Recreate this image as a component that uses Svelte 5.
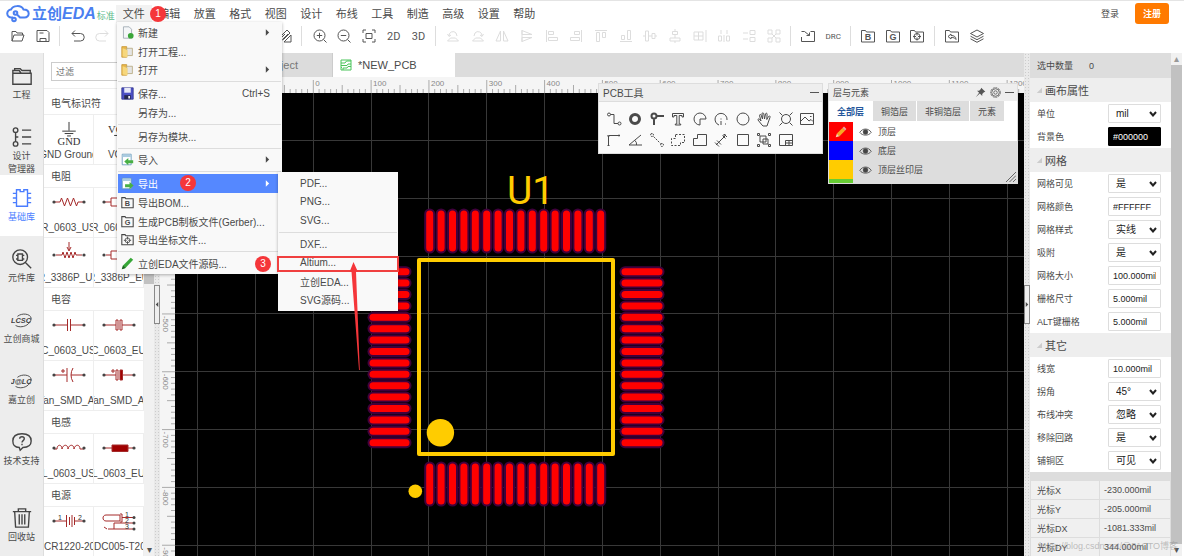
<script>
  const menus = ["文件", "编辑", "放置", "格式", "视图", "设计", "布线", "工具", "制造", "高级", "设置", "帮助"];

  const folder = "M1.5 14V2.5h4l1 1.5h8v10z";

  const toolbar = [
    { d: "M2 13V3.5h4l1 1.5h5.5v2M2 13l2-6h10l-2 6z" },
    { d: "M2 2.5h10l2 2v9H2zM5 13.5V10.5h6v3M4.5 5h4" },
    { sep: true },
    { d: "M5 2.5 2 5.5l3 3M2 5.5h8.500a3.5 3.5 0 0 1 0 7.5H4" },
    { d: "M11 2.5l3 3-3 3M14 5.5H5.500a3.5 3.5 0 0 0 0 7.5H12", off: true },
    { d: "M5 5h9v9H5zM2 11V2h9" },
    { d: "M3 3h10v11H3zM6 2h4v2H6z" },
    { d: "M3 3l10 10M13 3 3 13" },
    { d: "M3 4h10M5 4v10h6V4" },
    { sep: true },
    { d: "M7 3a4 4 0 1 0 0 8 4 4 0 0 0 0-8M10 10l4 4" },
    { d: "M2 8h12M8 2v12" },
    { d: "M3 13l1-5 6-6 3 3-6 6zM7 14l7-7v7zM5 9l3-3M6 11l5-5" },
    { sep: true },
    { d: "M7.5 2a5.5 5.5 0 1 0 0 11 5.5 5.5 0 0 0 0-11M4.8 7.5h5.4M7.5 4.8v5.4M11.5 11.5l3 3" },
    { d: "M7.5 2a5.5 5.5 0 1 0 0 11 5.5 5.5 0 0 0 0-11M4.8 7.5h5.4M11.5 11.5l3 3" },
    { d: "M2 5V2h3M11 2h3v3M14 11v3h-3M5 14H2v-3M5 5.5h6v5H5z" },
    { t: "2D" },
    { t: "3D" },
    { sep: true },
    { d: "M2.5 13h11l-3-3h-5zM4 8a4 4 0 0 1 7-3l1 3M2.5 6l1.5 2.5L6 7", off: true },
    { d: "M2.5 13h11l-3-3h-5zM12 8a4 4 0 0 0-7-3L4 8M13.5 6 12 8.5 10 7", off: true },
    { d: "M6.5 3v10H2zM9.5 3v10H14z", off: true },
    { d: "M3 2v12M3 2.5 13 6.5H3zM3 9.5h10L3 13.5z", off: true },
    { d: "M2.5 2v12M4.5 3.5h5v3h-5zM4.5 9.5h9v3h-9z", off: true },
    { d: "M13.5 2v12M6.5 3.5h5v3h-5zM2.5 9.5h9v3h-9z", off: true },
    { d: "M2 2.5h12M3.5 4.5h3v9h-3zM9.5 4.5h3v5h-3z", off: true },
    { d: "M2 13.5h12M3.5 7.5h3v4h-3zM9.5 2.5h3v9h-3z", off: true },
    { d: "M1 8h2M3.5 3h3v10h-3zM7 8h3M10 5.5h3v5h-3zM13 8h2", off: true },
    { d: "M8 1v2M5.5 3.5h5v3h-5zM8 7v3M3 10h10v3H3zM8 13v2", off: true },
    { d: "M14 2v12M2 4h9v8H2zM6.5 4v8M2 8h9", off: true },
    { d: "M5 2v4M11 2v4M2.5 8h3v5h-3zM10.5 8h3v5h-3zM8 7v7", off: true },
    { d: "M2 5h5M2 11h5M9 2.5h5v4H9zM9 9.5h5v4H9z", off: true },
    { d: "M2 2h4v4H2zM10 2h4v4h-4zM2 10h4v4H2zM10 10h4v4h-4zM6 6l4 4M10 6l-4 4", off: true },
    { sep: true },
    { d: "M1.5 9v4.5h13V3.5h-4M1.5 3.5h3l5 4M9.5 4.5v3h-3" },
    { t: "DRC", small: true },
    { sep: true },
    { d: folder, letter: "B" },
    { d: folder, letter: "G" },
    { d: folder + "M8 5.5a3 3 0 1 0 0 6 3 3 0 0 0 0-6M8 4.5v3M8 9.5v3M4 8.5h3M9 8.5h3" },
    { sep: true },
    { d: folder + "M7 6 4 8.5 7 11V9.5c3 0 4 .5 5 2 0-3-2-4-5-4z" },
    { d: "M8 2 1.5 5.5 8 9l6.5-3.5zM1.5 8.2 8 11.7l6.5-3.5M1.5 10.8 8 14.3l6.5-3.5" },
  ];

  const sideItems = [
    { label: "工程", d: "M2 21V6h7l2 3h11v12zM2 9h20M4 6V4h6l2 2h9v3" },
    { label: "设计\n管理器", d: "M5 2a2 2 0 1 0 0 5 2 2 0 0 0 0-5M5 7v10M5 17a2 2 0 1 0 0 5 2 2 0 0 0 0-5M5 12h3M12 4.5h10M12 12h10M12 19.5h10" },
    { label: "基础库", d: "M6 3h4v2h4V3h4v18H6zM2 7h4M2 12h4M2 17h4M18 7h4M18 12h4M18 17h4", active: true },
    { label: "元件库", d: "M10 2a8 8 0 1 0 0 16 8 8 0 0 0 0-16M16 16l6 6M7.5 6.5h5v7h-5zM5.5 8h2M5.5 12h2M12.5 8h2M12.5 12h2" },
    { label: "立创商城", brand: "LCSC" },
    { label: "嘉立创", brand: "J@LC" },
    { label: "技术支持", d: "M12 3C5 3 2 6 2 11s3 7 7 7l1 3 3-3c6 0 9-2 9-7s-3-8-10-8M9.5 8.5c0-3 5-3 5 0 0 2-2.5 2-2.5 4M12 14v1.5" },
  ];

  const library = [
    {
      title: "电气标识符",
      parts: [
        { name: "GND Ground", kind: "gnd" },
        { name: "VCC", kind: "vcc" },
      ],
    },
    {
      title: "电阻",
      parts: [
        { name: "R_0603_US", d: "M2 8h6l1.5-4 3 8 3-8 3 8 3-8 3 8 1.5-4h6" },
        { name: "R_0603_EU", d: "M2 8h7M9 4h16v8H9zM25 8h7" },
        { name: "R_3386P_US", d: "M4 11h6l1-3 2 6 2-6 2 6 2-6 2 6 2-6 1 3h6M17-2v8M15 3l2 4 2-4", low: true },
        { name: "R_3386P_EU", d: "M4 11h5M9 7h16v8H9zM25 11h5M17-2v8", low: true },
      ],
    },
    {
      title: "电容",
      parts: [
        { name: "C_0603_US", d: "M2 8h13M15.5 2v12M18.5 2v12M19 8h13" },
        { name: "C_0603_EU", d: "M2 8h12M14 3h2v10h-2zM18 3h2v10h-2zM20 8h12" },
        { name: "C_Tan_SMD_A-US", d: "M2 8h13M15 1v14M21 1q-4 7 0 14M19 8h13M9 4h4M11 2v4" },
        { name: "C_Tan_SMD_A-EU", d: "M2 8h12M14 3h2v10h-2zM20 8h12M9 4h4M11 2v4", fill: "M18 3h2.5v10H18z" },
      ],
    },
    {
      title: "电感",
      parts: [
        { name: "L_0603_US", d: "M2 9h3c0-5 5-5 5 0 1-5 6-5 6 0 1-5 6-5 6 0 1-5 6-5 6 0h4" },
        { name: "L_0603_EU", d: "M2 8h8M26 8h6", fill: "M10 5h16v6.5H10z" },
      ],
    },
    {
      title: "电源",
      parts: [
        { name: "CR1220-2032", d: "M2 8h12M14.5 2v12M17.5 4v8M20 2v12M22.5 4v8M23 8h9", marks: true, left: true },
        { name: "DC005-T20", d: "M18 2H4C0 2 0 8 4 8h14zM18 1h2v8h-2M20 4.5h12M32 10H12v6H6M2 14l3 2M12 16h20", jack: true, left: true },
      ],
    },
  ];

  const fileMenu = [
    { icon: "new", label: "新建", sub: true },
    { icon: "folder", label: "打开工程..." },
    { icon: "folder", label: "打开", sub: true },
    null,
    { icon: "save", label: "保存...", key: "Ctrl+S" },
    { label: "另存为..." },
    null,
    { label: "另存为模块..." },
    null,
    { icon: "import", label: "导入", sub: true },
    null,
    { icon: "export", label: "导出", sub: true, active: true },
    { icon: "B", label: "导出BOM..." },
    { icon: "G", label: "生成PCB制板文件(Gerber)..." },
    { icon: "pos", label: "导出坐标文件..." },
    null,
    { icon: "pen", label: "立创EDA文件源码..." },
  ];

  const exportMenu = ["PDF...", "PNG...", "SVG...", null, "DXF...", "Altium...", "立创EDA...", "SVG源码..."];

  const pcbTools = [
    { name: "导线", d: "M3 2a1.5 1.5 0 1 0 0 3 1.5 1.5 0 0 0 0-3M4.5 3.5H8v9h4M13.5 11a1.5 1.5 0 1 0 0 3 1.5 1.5 0 0 0 0-3" },
    { name: "焊盘", d: "M8 3.5a4.5 4.5 0 1 0 0 9 4.5 4.5 0 0 0 0-9", w: 3 },
    { name: "过孔", d: "M5 2.5a2.5 2.5 0 1 0 0 5 2.5 2.5 0 0 0 0-5M7.5 5H15M5 7.5V14", w: 2 },
    { name: "文本", d: "M2.5 2.5h11v3.5h-1.5V4.5H9.2v8.5h1.5v1H5.3v-1h1.5V4.5H4v1.5H2.5z" },
    { name: "圆弧", d: "M14 8A6 6 0 1 0 8 14V8z" },
    { name: "圆弧中心", d: "M14 9A6 6 0 1 0 6 14M8 7.5v1M8 10v4M12.5 12.5v1" },
    { name: "圆", d: "M8 2a6 6 0 1 0 0 12A6 6 0 0 0 8 2" },
    { name: "拖动", d: "M6 14 2 9c-.5-1 1-1.5 1.5-.8L5 10 3.5 4.5c0-1.3 1.5-1.3 1.8 0L6.5 8 6 2.8c0-1.3 1.5-1.3 1.8 0L8.5 8l1-5c.3-1.2 1.8-1 1.6.3L10.8 8.5l1.7-3c.6-1 2-.4 1.5.8L12 12l-1 3H7z" },
    { name: "挖孔", d: "M8 3.5a4.5 4.5 0 1 0 0 9 4.5 4.5 0 0 0 0-9M1.5 1.5l3 3M14.5 1.5l-3 3M1.5 14.5l3-3M14.5 14.5l-3-3" },
    { name: "图片", d: "M1.5 2.5h13v11h-13zM2 10l4-4 4 4 2-1.5 2 2M11 5.5h1.5" },
    { name: "坐标原点", d: "M2.5 14V3.5H14M1.5 3.5a1 1 0 1 0 2 0M1.5 13.5h2M13 2.500v2" },
    { name: "量角器", d: "M14 3 2 13h13M8 8.5q2 2 1.5 4.5" },
    { name: "连接焊盘", d: "M3 1.5a1.5 1.5 0 1 0 0 3 1.5 1.5 0 0 0 0-3M13 11.5a1.5 1.5 0 1 0 0 3 1.5 1.5 0 0 0 0-3M4.5 4.5l7 7", dash: "2 1" },
    { name: "铺铜", d: "M5.5 2.5h9v8h-4v3h-9v-7h4z", dash: "2 1.5" },
    { name: "实心填充", d: "M5.5 2.5h9v11h-13v-7h4z" },
    { name: "尺寸", d: "M3 13 13 3M9.5 3.5l3 3M11 2l3 3M2 10.5l4 4M4 8.5l4 4M13 3h-3" },
    { name: "矩形", d: "M2.5 2.5h11v11h-11z" },
    { name: "组合", d: "M4 4h6v6H4zM7 7h5v5H7zM1.5 1.5h2v2h-2zM12.5 1.5h2v2h-2zM1.5 12.5h2v2h-2zM12.5 12.5h2v2h-2z" },
    { name: "工作层", d: "M1.5 2.5h13v11h-13zM7.5 8.5h7M7.5 8.5v5M11 8.5v5M7.5 11h7" },
  ];

  const layerTabs = ["全部层", "铜箔层", "非铜箔层", "元素"];
  const layers = [
    { name: "顶层", color: "#ff0000", active: true },
    { name: "底层", color: "#0000ff" },
    { name: "顶层丝印层", color: "#ffcc00" },
    { name: "", color: "#66cc33" },
  ];

  const sections = [
    {
      title: "画布属性",
      rows: [
        { label: "单位", value: "mil", select: true },
        { label: "背景色", value: "#000000", dark: true },
      ],
    },
    {
      title: "网格",
      rows: [
        { label: "网格可见", value: "是", select: true },
        { label: "网格颜色", value: "#FFFFFF" },
        { label: "网格样式", value: "实线", select: true },
        { label: "吸附", value: "是", select: true },
        { label: "网格大小", value: "100.000mil" },
        { label: "栅格尺寸", value: "5.000mil" },
        { label: "ALT键栅格", value: "5.000mil" },
      ],
    },
    {
      title: "其它",
      rows: [
        { label: "线宽", value: "10.000mil" },
        { label: "拐角", value: "45°", select: true },
        { label: "布线冲突", value: "忽略", select: true },
        { label: "移除回路", value: "是", select: true },
        { label: "铺铜区", value: "可见", select: true },
      ],
    },
  ];

  const cursor = [
    ["光标X", "-230.000mil"],
    ["光标Y", "-205.000mil"],
    ["光标DX", "-1081.333mil"],
    ["光标DY", "344.000mil"],
  ];

  // 100mil on the board is GRID px on screen
  const GRID = 57.82;
  const X0 = 138.3;
  const Y0 = 105.3;
  const range = (n, from = 0) => Array.from({ length: n }, (_, i) => i + from);

  const vLines = range(40, -2).map((i) => X0 + i * GRID);
  const hLines = range(20, -1).map((i) => Y0 + i * GRID);

  const hTicks = range(420, -26).map((i) => ({ i, p: X0 + 15 + (i * GRID) / 10 }));
  const vTicks = range(220, -18).map((i) => ({ i, p: Y0 + (i * GRID) / 10 }));
  const isMajor = (i) => i % 10 === 0;
  const tick = (i) => (isMajor(i) ? 13 : i % 5 === 0 ? 8 : 4);

  const pads = range(16).flatMap((i) => {
    const x = 254.7 + i * 11.4;
    const y = 178.7 + i * 11.4;
    return [
      { x1: x, x2: x, y1: 121, y2: 155 },
      { x1: x, x2: x, y1: 374, y2: 408 },
      { y1: y, y2: y, x1: 198, x2: 231 },
      { y1: y, y2: y, x1: 450, x2: 484 },
    ];
  });
</script>

{#snippet glyph(icon)}
  <svg class="glyph" viewBox="0 0 16 16" stroke-width={icon.w ?? 1} stroke-dasharray={icon.dash}>
    <path d={icon.d} />
    {#if icon.letter}<text x="8" y="12">{icon.letter}</text>{/if}
  </svg>
{/snippet}

{#snippet menuIcon(name)}
  <svg class="menu-icon" viewBox="0 0 16 16">
    {#if name === "new"}
      <path d="M3 1h7l3 3v11H3z" fill="#f4f6f8" stroke="#9aa4ae" />
      <circle cx="12" cy="12" r="3.5" fill="#3aa63a" />
    {:else if name === "folder"}
      <path d="M1 2h6v13H1z" fill="#e9b84a" stroke="#c79835" />
      <path d="M7 4h7v9H7z" fill="#e4e4e4" stroke="#b5a77c" />
      <path d="M2 4l6 2v9l-6-1z" fill="#f6d77d" />
    {:else if name === "save"}
      <path d="M1 1h14v14H1z" fill="#4b4fc4" stroke="#33378f" />
      <path d="M4 1h8v6H4z" fill="#e7e9f7" />
      <path d="M4 10h8v5H4z" fill="#26294f" />
      <path d="M9 11h2v3H9z" fill="#fff" />
    {:else if name === "import" || name === "export"}
      <path d="M1.5 1.5h11v13h-11z" fill="#fff" stroke="#5f94b8" />
      <path d="M2 2h10v3H2z" fill="#a9cbe0" />
      {#if name === "import"}
        <path d="M4 10.5 9 6v3h6v3.5H9V15z" fill="#48b045" />
      {:else}
        <path d="M15.5 10.5 10.5 6v3H5v3.5h5.5V15z" fill="#48b045" />
      {/if}
    {:else if name === "pen"}
      <path d="M1 15l1.5-4.5L12 1l3 2.5-9.5 10z" fill="#37a737" />
      <path d="M1 15l1.5-4.5 3 3z" fill="#1d5f22" />
    {:else if name}
      <path d="M1 14.5V2h4l1 1.5h9v11z" fill="none" stroke="#444" stroke-width="1.3" />
      {#if name === "pos"}
        <path d="M8 6a3 3 0 1 0 0 6 3 3 0 0 0 0-6M8 4.5V8M8 10v4M3.5 9H7M9 9h3.5" fill="none" stroke="#444" />
      {:else}
        <text x="8" y="12.5">{name}</text>
      {/if}
    {/if}
  </svg>
{/snippet}

{#snippet chevron(dir)}
  <svg class="tri" viewBox="0 0 6 8"><path d={dir === "left" ? "M5 0v8L1 4z" : "M1 0v8l4-4z"} /></svg>
{/snippet}

<div class="app">
  <header>
    <div class="top">
      <a class="logo" href="/">
        <svg viewBox="0 0 24 18">
          <path d="M7 12.5H5.500a4 4 0 0 1-.5-8C7 .5 15-.5 17.5 4.5c7 0 6.5 8 1 8H14L11 9.5" />
          <circle cx="9.5" cy="8" r="1.8" />
          <circle cx="8" cy="14.5" r="1.8" />
        </svg>
        <span class="brand">立创<em>EDA</em></span>
        <span class="edition">标准</span>
      </a>
      <nav class="menubar">
        {#each menus as item, i}
          <button class:open={i === 0}>{item}</button>
        {/each}
      </nav>
      <div class="account">
        <a href="/login">登录</a>
        <button class="signup">注册</button>
      </div>
    </div>

    <div class="toolbar">
      {#each toolbar as tool}
        {#if tool.sep}
          <span class="sep"></span>
        {:else}
          <button class:off={tool.off} class:small={tool.small}>
            {#if tool.t}{tool.t}{:else}{@render glyph(tool)}{/if}
          </button>
        {/if}
      {/each}
    </div>
  </header>

  <main>
    <nav class="side">
      {#each sideItems as item}
        <button class:active={item.active}>
          {#if item.brand}
            <svg class="mark" viewBox="0 0 24 22">
              <path d="M5 17c7 4 17-1 17-8C21 4 12 3 7 7" />
              <text x="11" y="14">{item.brand}</text>
            </svg>
          {:else}
            <svg viewBox="0 0 24 24"><path d={item.d} /></svg>
          {/if}
          <span>{item.label}</span>
        </button>
      {/each}
      <button class="trash">
        <svg viewBox="0 0 24 24"><path d="M2 5h20M8 5V2h8v3M4 5l1 17h14l1-17M9 8v11M12 8v11M15 8v11" /></svg>
        <span>回收站</span>
      </button>
    </nav>

    <aside class="library">
      <div class="filter"><input type="text" placeholder="过滤" aria-label="过滤" /></div>
      {#each library as group}
        <h3>{group.title}</h3>
        <div class="parts">
          {#each group.parts as part}
            <div class="part" class:left={part.left}>
              {#if part.kind === "gnd"}
                <svg class="symbol tall" viewBox="0 0 34 28">
                  <path class="ink" d="M17 1v9M10 10.5h14M12.5 13h9M15 15.5h4" />
                  <text class="net" x="17" y="25">GND</text>
                </svg>
              {:else if part.kind === "vcc"}
                <svg class="symbol tall" viewBox="0 0 34 28">
                  <text class="net" x="17" y="12">VCC</text>
                  <path class="ink" d="M12 15h10M17 15v9" />
                </svg>
              {:else}
                <svg class="symbol" viewBox="0 0 34 18">
                  <path d={part.d} />
                  {#if part.fill}<path class="solid" d={part.fill} />{/if}
                  {#if part.marks}
                    <text x="8" y="7">1</text>
                    <text x="28" y="7">2</text>
                  {/if}
                  {#if part.jack}
                    <circle cx="32" cy="4.5" r="1.5" />
                    <circle cx="32" cy="10" r="1.5" />
                    <circle cx="32" cy="16" r="1.5" />
                    <text x="25" y="4">1</text>
                    <text x="25" y="10">2</text>
                    <text x="25" y="16">3</text>
                  {:else}
                    <circle cx="2" cy={part.low ? 11 : 8} r="1.6" />
                    <circle cx="32" cy={part.low ? 11 : 8} r="1.6" />
                  {/if}
                </svg>
              {/if}
              <span>{part.name}</span>
            </div>
          {/each}
        </div>
      {/each}
    </aside>
    <div class="scrollbar lib-scroll">
      <span class="thumb"></span>
      <span class="arrow">▾</span>
    </div>
    <div class="splitter"><button aria-label="收起左侧">{@render chevron("left")}</button></div>

    <section class="workspace">
      <div class="tabs">
        <button class="tab">PCB Project</button>
        <button class="tab active">
          <svg viewBox="0 0 12 12"><path d="M1 1h10v10H1zM1 4h4l1.5-2H11M1 6.5h6l1-1.5h3M3 11V9h4l1-1.5h3M1 8.5h1" /></svg>
          *NEW_PCB
        </button>
      </div>
      <svg class="ruler-h">
        {#each hTicks as { i, p }}
          <path d="M{p} 16V{16 - tick(i)}" />
          {#if isMajor(i)}<text x={p + 2} y="9">{i * 10}</text>{/if}
        {/each}
      </svg>
      <div class="board">
        <svg class="ruler-v">
          {#each vTicks as { i, p }}
            <path d="M15 {p}H{15 - tick(i)}" />
            {#if isMajor(i)}<text transform="translate(3 {p + 2}) rotate(90)">{-(i / 10 + 3) * 100}</text>{/if}
          {/each}
        </svg>
        <svg class="canvas">
          <g class="grid">
            {#each vLines as x}<line x1={x} x2={x} y1="0" y2="100%" />{/each}
            {#each hLines as y}<line x1="0" x2="100%" y1={y} y2={y} />{/each}
          </g>
          <g class="mask">
            {#each pads as pad}<line {...pad} />{/each}
          </g>
          <g class="pads">
            {#each pads as pad}<line {...pad} />{/each}
          </g>
          <g class="silk">
            <rect x="244" y="167" width="194" height="194" />
            <circle cx="265.4" cy="339.7" r="13.7" />
            <circle cx="240.3" cy="398.3" r="6.8" />
            <text x="332" y="111">U1</text>
          </g>
        </svg>
      </div>

      <div class="window tools">
        <div class="title"><span>PCB工具</span><b></b></div>
        <div class="tool-grid">
          {#each pcbTools as tool}
            <button aria-label={tool.name}>{@render glyph(tool)}</button>
          {/each}
        </div>
      </div>

      <div class="window layers">
        <div class="title">
          <span>层与元素</span>
          <svg viewBox="0 0 16 16"><path d="M9 1l6 6-2 .5-2.5 2.5v3L7 9.5 1 15l5-6.5L3 5.5h3L8.5 3z" fill="#555" /></svg>
          <svg viewBox="0 0 16 16" fill="none" stroke="#555" stroke-width="1.2"><circle cx="8" cy="8" r="7" stroke-dasharray="3 1" /><circle cx="8" cy="8" r="5.5" /><circle cx="8" cy="8" r="2.5" /></svg>
          <b></b>
        </div>
        <div class="layer-tabs">
          {#each layerTabs as tab, i}
            <button class:active={i === 0}>{tab}</button>
          {/each}
        </div>
        <ul>
          {#each layers as layer}
            <li class:active={layer.active}>
              <i style="background: {layer.color}">
                {#if layer.active}
                  <svg viewBox="0 0 16 16">
                    <path d="M1 15l1.5-5L6 13.5z" fill="#f3dcb0" />
                    <path d="M2.5 10 10 2.5 13.5 6 6 13.5z" fill="#f7a824" />
                    <path d="M10 2.5 12 .8l3.2 3.2-1.7 2z" fill="#f2a3a0" />
                  </svg>
                {/if}
              </i>
              <svg class="eye" viewBox="0 0 16 12">
                <path d="M1 6.5C4 1 12 1 15 6.5 12 11 4 11 1 6.5z" />
                <circle cx="8" cy="6" r="2.8" />
              </svg>
              <span>{layer.name}</span>
            </li>
          {/each}
        </ul>
        <svg class="grip" viewBox="0 0 10 10"><path d="M0 10 10 0M3.5 10 10 3.5M7 10l3-3" /></svg>
      </div>
    </section>

    <div class="splitter"><button aria-label="收起右侧">{@render chevron("right")}</button></div>
    <aside class="props">
      <div class="count"><span>选中数量</span><span>0</span></div>
      {#each sections as section, s}
        <h2><svg viewBox="0 0 8 8"><path d="M8 1v7H1z" /></svg>{section.title}</h2>
        {#each section.rows as row, r}
          <div class="row">
            <label for="p{s}-{r}">{row.label}</label>
            {#if row.select}
              <span class="select">
                <select id="p{s}-{r}"><option>{row.value}</option></select>
                <svg viewBox="0 0 8 6"><path d="M1 1l3 3.5L7 1" /></svg>
              </span>
            {:else}
              <input id="p{s}-{r}" type="text" class:dark={row.dark} value={row.value} />
            {/if}
          </div>
        {/each}
      {/each}
      <div class="cursor">
        <table>
          <tbody>
            {#each cursor as [name, value]}
              <tr><th scope="row">{name}</th><td>{value}</td></tr>
            {/each}
          </tbody>
        </table>
      </div>
    </aside>
    <div class="scrollbar prop-scroll">
      <span class="arrow up">▴</span>
      <span class="thumb"></span>
      <span class="arrow">▾</span>
    </div>
  </main>

  <div class="menu file-menu">
    {#each fileMenu as item}
      {#if item}
        <button class:active={item.active}>
          {@render menuIcon(item.icon)}
          <span>{item.label}</span>
          {#if item.key}<kbd>{item.key}</kbd>{/if}
          {#if item.sub}{@render chevron("right")}{/if}
        </button>
      {:else}
        <hr />
      {/if}
    {/each}
  </div>
  <div class="menu export-menu">
    {#each exportMenu as item}
      {#if item}<button>{item}</button>{:else}<hr />{/if}
    {/each}
  </div>

  <span class="badge one">1</span>
  <span class="badge two">2</span>
  <span class="badge three">3</span>
  <span class="frame"></span>
  <svg class="pointer" viewBox="0 0 12 110"><path d="M4.500 0 9 10 7 9.500 10.800 108 10 108 2.500 9.500 .5 10z" /></svg>
  <span class="watermark">https://blog.csdn.net/@51CTO博客</span>
</div>

<style>
  :global(body) {
    margin: 0;
    font-family: "Liberation Sans", "Noto Sans CJK SC", sans-serif;
  }

  .app {
    position: relative;
    display: flex;
    flex-direction: column;
    height: 100vh;
    overflow: hidden;
    background: #fff;
    color: #4a4a4a;
    font-size: 10px;
  }

  .app * {
    box-sizing: border-box;
  }

  button,
  input,
  select {
    margin: 0;
    padding: 0;
    border: 0;
    background: none;
    font: inherit;
    color: inherit;
  }

  a {
    color: inherit;
    text-decoration: none;
  }

  svg {
    flex: none;
    display: block;
  }

  /* header */
  header {
    flex: none;
    height: 53px;
    border-top: 1px solid #e4e4e4;
  }

  .top {
    display: flex;
    align-items: center;
    height: 25px;
  }

  .logo {
    display: flex;
    align-items: center;
    flex: none;
    width: 110px;
    margin-left: 6px;
    white-space: nowrap;
  }

  .logo svg {
    width: 24px;
    height: 18px;
    margin-right: 2px;
    fill: none;
    stroke: #4a7ff0;
    stroke-width: 2;
  }

  .brand {
    font-size: 15px;
    font-weight: bold;
    line-height: 20px;
    color: #4a7ff0;
  }

  .brand em {
    font-size: 16px;
  }

  .edition {
    margin: 4px 0 0 1px;
    font-size: 9px;
    line-height: 12px;
    color: #5dbb8a;
  }

  .menubar {
    display: grid;
    grid-template-columns: repeat(12, 1fr);
    width: 426px;
    font-size: 11px;
  }

  .menubar button {
    height: 18px;
    line-height: 18px;
    white-space: nowrap;
  }

  .menubar .open {
    background: #f2f2f2;
  }

  .account {
    display: flex;
    align-items: center;
    gap: 16px;
    margin: 0 15px 0 auto;
    font-size: 9px;
  }

  .signup {
    width: 34px;
    height: 21px;
    border-radius: 3px;
    background: #ff7a00;
    color: #fff;
    font-weight: bold;
  }

  .toolbar {
    display: flex;
    align-items: center;
    width: 983px;
    height: 20px;
    margin-left: 6px;
  }

  .toolbar button {
    flex: 1 1 0;
    display: grid;
    place-items: center;
    min-width: 0;
    height: 20px;
    color: #555;
    font-family: Roboto, sans-serif;
    font-size: 11px;
  }

  .toolbar .small {
    font-size: 8px;
  }

  .toolbar .off {
    color: #ddd;
  }

  .toolbar .sep {
    flex: none;
    width: 1px;
    height: 20px;
    margin: 0 5px 0 4px;
    background: #ddd;
  }

  .glyph {
    width: 16px;
    height: 16px;
    fill: none;
    stroke: currentColor;
  }

  .glyph text,
  .menu-icon text {
    font: bold 9px "Liberation Sans", sans-serif;
    text-anchor: middle;
    fill: currentColor;
    stroke: none;
  }

  /* body */
  main {
    flex: 1;
    display: flex;
    min-height: 0;
  }

  .side {
    flex: none;
    display: flex;
    flex-direction: column;
    width: 43px;
    background: #ededed;
    font-size: 9px;
  }

  .side button {
    display: flex;
    flex-direction: column;
    align-items: center;
    gap: 2px;
    height: 61px;
    padding-top: 12px;
    line-height: 13px;
    white-space: pre-line;
  }

  .side svg {
    width: 22px;
    height: 22px;
    fill: none;
    stroke: #444;
    stroke-width: 1.5;
  }

  .side .mark {
    stroke-width: 1;
  }

  .side .mark text {
    font: italic bold 8px "Liberation Sans", sans-serif;
    text-anchor: middle;
    fill: #444;
    stroke: none;
  }

  .side .active {
    background: #fff;
    color: #4a7dff;
  }

  .side .active svg {
    stroke: #4a7dff;
  }

  .side .trash {
    margin-top: auto;
  }

  .library {
    flex: none;
    width: 101px;
    overflow: hidden;
    border-left: 1px solid #ddd;
  }

  .filter {
    height: 36px;
    padding: 9px 0 0 7px;
    border-bottom: 1px solid #eee;
  }

  .filter input {
    width: 90px;
    height: 19px;
    padding-left: 4px;
    border: 1px solid #ccc;
    font-size: 9px;
  }

  h3 {
    height: 23px;
    margin: 0;
    padding-left: 7px;
    border-bottom: 1px solid #eee;
    font-size: 10px;
    font-weight: normal;
    line-height: 23px;
  }

  .filter + h3 {
    height: 26px;
    line-height: 30px;
  }

  .parts {
    display: grid;
    grid-template-columns: 1fr 1fr;
  }

  .part {
    display: flex;
    flex-direction: column;
    align-items: center;
    justify-content: space-between;
    height: 50px;
    padding: 6px 0 2px;
    overflow: hidden;
    border-right: 1px solid #eee;
    border-bottom: 1px solid #eee;
    line-height: 14px;
    white-space: nowrap;
  }

  .part.left {
    align-items: flex-start;
  }

  .part.left svg {
    align-self: center;
  }

  .symbol {
    width: 34px;
    height: 18px;
    overflow: visible;
    fill: none;
    stroke: #a52a2a;
  }

  .symbol.tall {
    height: 27px;
  }

  .symbol circle {
    fill: #444;
    stroke: none;
  }

  .symbol .solid {
    fill: #a00000;
  }

  .symbol .ink {
    stroke: #333;
  }

  .symbol text {
    font: 7px "Liberation Sans", sans-serif;
    text-anchor: middle;
    fill: #333;
    stroke: none;
  }

  .symbol .net {
    font: 11px "Liberation Serif", serif;
  }

  .scrollbar {
    flex: none;
    display: flex;
    flex-direction: column;
    align-items: center;
    background: #f1f1f1;
    color: #555;
    font-size: 10px;
    line-height: 12px;
  }

  .scrollbar .thumb {
    width: 100%;
    background: #c1c1c1;
  }

  .lib-scroll {
    width: 10px;
    justify-content: space-between;
  }

  .lib-scroll .thumb {
    height: 46%;
  }

  .prop-scroll {
    width: 11px;
    margin-right: 2px;
  }

  .prop-scroll .thumb {
    flex: 1;
  }

  .scrollbar .up {
    color: #999;
  }

  .splitter {
    flex: none;
    display: flex;
    align-items: center;
    width: 6px;
    background: radial-gradient(#ccc 30%, #e9e9e9 40%) 0 0 / 3px 3px;
  }

  .splitter button {
    display: grid;
    place-items: center;
    width: 6px;
    height: 39px;
    border: 1px solid #888;
    background: #eee;
  }

  .tri {
    width: 5px;
    height: 7px;
    fill: currentColor;
  }

  .splitter .tri {
    width: 4px;
    height: 5px;
  }

  /* workspace */
  .workspace {
    position: relative;
    flex: 1;
    display: flex;
    flex-direction: column;
    min-width: 0;
  }

  .tabs {
    flex: none;
    display: flex;
    height: 24px;
    background: #dcdcdc;
    font-size: 11px;
  }

  .tab {
    display: flex;
    align-items: center;
    gap: 6px;
    width: 122px;
    padding-left: 7px;
  }

  .tab:first-child {
    width: 173px;
    padding: 0 34px 0 0;
    justify-content: flex-end;
    border-right: 1px solid #ccc;
    color: #777;
  }

  .tab.active {
    background: #fff;
  }

  .tab svg {
    width: 12px;
    height: 12px;
    fill: none;
    stroke: #4bc45a;
  }

  .ruler-h {
    width: 100%;
    height: 16px;
    background: #f5f5f5;
  }

  .board {
    flex: 1;
    display: flex;
    min-height: 0;
  }

  .ruler-v {
    width: 15px;
    height: 100%;
    background: #f5f5f5;
  }

  .ruler-h path,
  .ruler-v path {
    stroke: #aaa;
  }

  .ruler-h text,
  .ruler-v text {
    font-size: 8px;
    fill: #888;
  }

  .canvas {
    flex: 1;
    min-width: 0;
    height: 100%;
    background: #000;
  }

  .grid line {
    stroke: #383838;
    shape-rendering: crispEdges;
  }

  .mask line {
    stroke: #40003c;
    stroke-width: 11;
    stroke-linecap: round;
  }

  .pads line {
    stroke: #f00;
    stroke-width: 7;
    stroke-linecap: round;
  }

  .silk {
    fill: #fc0;
  }

  .silk rect {
    fill: none;
    stroke: #fc0;
    stroke-width: 4;
    stroke-linejoin: round;
  }

  .silk text {
    font: 39px Roboto, sans-serif;
  }

  .window {
    position: absolute;
    top: 30px;
    border: 1px solid #ddd;
    background: #fafafa;
  }

  .tools {
    right: 201px;
    width: 225px;
  }

  .layers {
    right: 6px;
    width: 190px;
    height: 101px;
    overflow: hidden;
  }

  .title {
    display: flex;
    align-items: center;
    gap: 4px;
    height: 17px;
    padding: 0 3px 0 4px;
    background: #eee;
  }

  .layers .title {
    font-size: 9px;
  }

  .title span {
    margin-right: auto;
  }

  .title svg {
    width: 11px;
    height: 11px;
  }

  .title b {
    width: 9px;
    height: 1px;
    background: #555;
  }

  .tool-grid {
    display: grid;
    grid-template-columns: repeat(10, 1fr);
    grid-auto-rows: 21px;
    padding: 6px 4px 3px;
    border-top: 1px solid #ddd;
  }

  .tool-grid button {
    display: grid;
    place-items: center;
  }

  .layer-tabs {
    display: flex;
    gap: 1px;
    height: 20px;
    background: #fff;
    font-size: 9px;
  }

  .layer-tabs button {
    padding: 0 8px;
    background: #ddd;
  }

  .layer-tabs .active {
    background: #fff;
    color: #26589c;
    font-weight: bold;
  }

  ul {
    margin: 0;
    padding: 1px 0 0;
    list-style: none;
    background: #fff;
    font-size: 9px;
  }

  li {
    display: flex;
    align-items: center;
    gap: 6px;
    height: 19px;
    background: #ddd;
  }

  li.active {
    background: #fff;
  }

  li i {
    display: grid;
    place-items: center;
    width: 24px;
    height: 100%;
  }

  li i svg {
    width: 12px;
    height: 12px;
  }

  .eye {
    width: 13px;
    height: 10px;
    fill: none;
    stroke: #444;
  }

  .eye circle {
    fill: #444;
  }

  .grip {
    position: absolute;
    right: 1px;
    bottom: 1px;
    width: 10px;
    height: 10px;
    stroke: #666;
  }

  /* properties */
  .props {
    flex: none;
    width: 141px;
    overflow: hidden;
    font-size: 9px;
  }

  .count {
    display: flex;
    align-items: center;
    gap: 16px;
    height: 25px;
    padding-left: 7px;
    background: #ddd;
  }

  h2 {
    display: flex;
    align-items: center;
    gap: 3px;
    height: 24px;
    margin: 0;
    padding-left: 6px;
    background: #eee;
    font-size: 11px;
    font-weight: normal;
  }

  h2 svg {
    width: 6px;
    height: 6px;
    fill: #ccc;
  }

  .row {
    display: flex;
    align-items: center;
    justify-content: space-between;
    height: 23px;
    padding: 0 10px 0 7px;
  }

  .row input,
  .select {
    width: 53px;
    height: 19px;
    border: 1px solid #ddd;
    border-radius: 1px;
  }

  .row input {
    padding: 0 4px;
    color: #222;
  }

  .row .dark {
    border-color: #000;
    background: #000;
    color: #fff;
  }

  .select {
    position: relative;
  }

  .select select {
    width: 100%;
    height: 17px;
    padding-left: 7px;
    appearance: none;
    color: #222;
    font-size: 10px;
  }

  .select svg {
    position: absolute;
    top: 6px;
    right: 3px;
    width: 8px;
    height: 6px;
    fill: none;
    stroke: #222;
    stroke-width: 2;
    pointer-events: none;
  }

  .cursor {
    border-top: 8px solid #ddd;
  }

  table {
    width: 100%;
    border-collapse: collapse;
    background: #f0f0f0;
  }

  th,
  td {
    height: 19px;
    padding: 0 0 0 6px;
    border: 1px solid #ddd;
    font-weight: normal;
    text-align: left;
  }

  th {
    width: 69px;
  }

  td {
    padding-left: 4px;
  }

  /* drop-down menus */
  .menu {
    position: absolute;
    display: flex;
    flex-direction: column;
    padding: 1px;
    background: #f9f9f9;
    box-shadow: 0 1px 3px rgba(0, 0, 0, 0.3);
  }

  .file-menu {
    top: 22px;
    left: 117px;
    width: 165px;
    height: 252px;
  }

  .export-menu {
    top: 172px;
    left: 278px;
    width: 120px;
    height: 139px;
    padding: 2px 1px;
  }

  .menu button {
    flex: 1 1 0;
    display: flex;
    align-items: center;
    min-height: 0;
    padding-left: 3px;
    text-align: left;
    white-space: nowrap;
  }

  .export-menu button {
    padding-left: 21px;
  }

  .menu .active {
    background: #5588ff;
    color: #fff;
  }

  .menu hr {
    flex: none;
    width: 100%;
    height: 1px;
    margin: 2px 0;
    border: 0;
    background: #ddd;
  }

  .menu-icon {
    width: 13px;
    height: 13px;
    margin-right: 4px;
  }

  .menu .tri,
  kbd {
    margin: 0 11px 0 auto;
    font: inherit;
  }

  /* annotations */
  .badge {
    position: absolute;
    width: 16px;
    height: 16px;
    border-radius: 50%;
    background: #f5363a;
    color: #fff;
    font-size: 10px;
    line-height: 16px;
    text-align: center;
  }

  .badge.one {
    top: 6px;
    left: 150px;
  }

  .badge.two {
    top: 175px;
    left: 180px;
  }

  .badge.three {
    top: 256px;
    left: 255px;
  }

  .frame {
    position: absolute;
    top: 256px;
    left: 277px;
    width: 122px;
    height: 16px;
    border: 2px solid #f04040;
  }

  .pointer {
    position: absolute;
    top: 262px;
    left: 349px;
    width: 12px;
    height: 110px;
    fill: #f5363a;
  }

  .watermark {
    position: absolute;
    right: 6px;
    bottom: 4px;
    font-size: 9px;
    line-height: 12px;
    color: rgba(150, 150, 150, 0.6);
  }
</style>
